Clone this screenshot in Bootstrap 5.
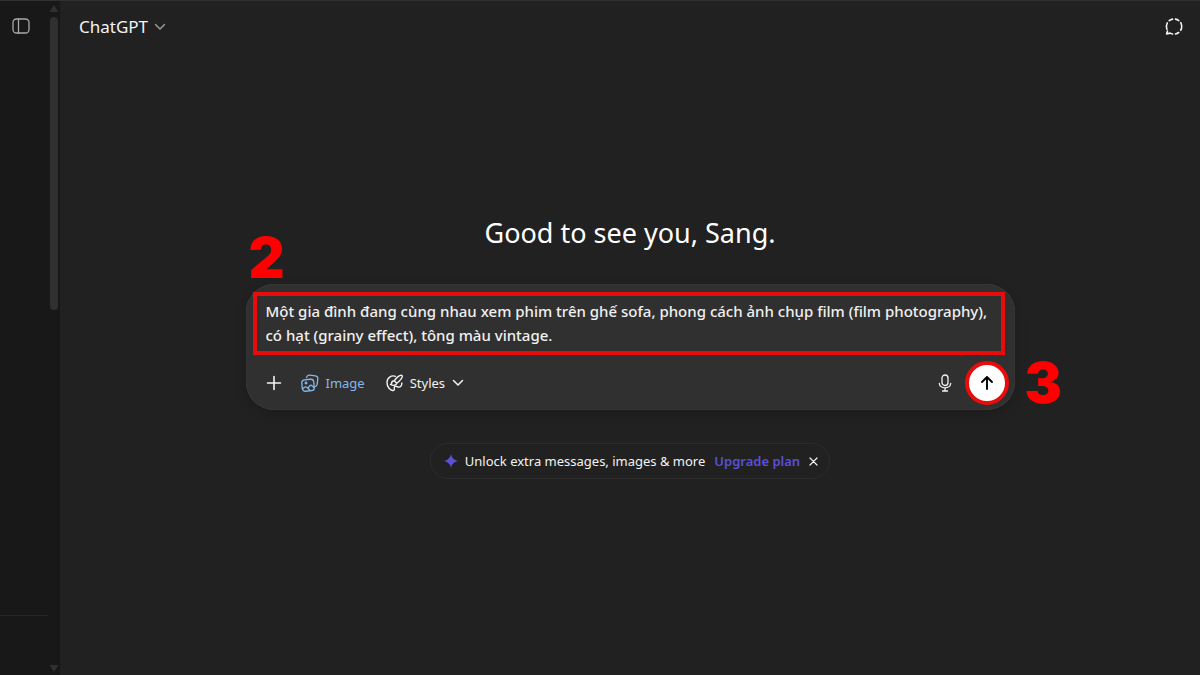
<!DOCTYPE html>
<html lang="vi">
<head>
<meta charset="utf-8">
<meta name="viewport" content="width=device-width, initial-scale=1">
<title>ChatGPT</title>
<link href="https://cdn.jsdelivr.net/npm/bootstrap@5.3.0/dist/css/bootstrap.min.css" rel="stylesheet">
<style>
body{background:#212121;color:#f3f3f3;font-family:"Noto Sans","Open Sans",sans-serif;font-size:13px;line-height:20px}
.shell{border-top:1px solid #303030}
button{background:none;border:0;padding:0;color:inherit;display:flex;align-items:center}
svg{display:block;fill:none;stroke:currentColor;stroke-linecap:round;stroke-linejoin:round;flex:none}
.side{width:60px;background:#181818}
.side-body{width:48px}
.toggle{color:#a8a8a8;margin:16px 0 0 12px}
.side-foot{height:60px;border-top:1px solid #262626}
.scrollbar-rail{width:12px;padding:4px 2px 3px 2px}
.scrollbar-rail svg{fill:#303030;stroke:none}
.thumb{width:8px;height:44%;margin:5px 0 auto;border-radius:4px;background:#303030}
.topbar{height:52px;padding:0 16px 0 19px}
.model{font-size:17px;line-height:24px;gap:6px}
.model svg{color:#a0a0a0}
.stage{padding:160px 16px 0}
h1{font-size:27px;line-height:40px;font-weight:400;margin:0 0 31px;color:#fff}
.composer{width:100%;max-width:769px;background:#303030;border-radius:28px;padding:8px 6px 5px 7px;box-shadow:0 4px 12px rgba(0,0,0,.16),inset 0 0 1px rgba(255,255,255,.25)}
.prompt-box{border:4px solid #e90c0c;margin-right:4px;padding:3px 9px 4px}
.prompt-box textarea{display:block;width:100%;height:48px;resize:none;border:0;padding:0;outline:0;overflow:hidden;background:none;color:#f0f0f0;font-size:15px;line-height:24px;font-weight:500}
.tools{height:44px;margin-top:6px;padding-left:13px}
.image-tool{color:#84b9ed;gap:7px;margin-left:19px}
.style-tool{gap:7px;margin-left:21px}
.send{width:44px;height:44px;border:4px solid #e90c0c;border-radius:50%;background:#fff;color:#000;justify-content:center;margin-left:13px}
.step{position:absolute;color:#f00;font:900 56px/56px Inter,sans-serif}
.step-two{left:3px;top:-54px}
.step-three{left:100%;margin-left:10px;bottom:-1px}
.upsell{margin-top:33px;height:36px;padding:0 11px 0 13px;border:1px solid #2c2c2c;border-radius:18px;font-size:13px}
.upsell a{color:#5b50d6;font-weight:600;text-decoration:none;margin:0 9px}
.upsell span{margin-left:7px}
.spark{fill:#5b50d6;stroke:none}
</style>
</head>
<body>
<div class="shell d-flex min-vh-100">
  <aside class="side d-flex flex-shrink-0">
    <div class="side-body d-flex flex-column justify-content-between">
      <button class="toggle" aria-label="Open sidebar"><svg width="18" height="18" viewBox="0 0 18 18" stroke-width="1.3"><rect x="1" y="2" width="16" height="14" rx="3.5"/><path d="M6.5 2v14"/></svg></button>
      <div class="side-foot"></div>
    </div>
    <div class="scrollbar-rail d-flex flex-column" aria-hidden="true">
      <svg width="8" height="7" viewBox="0 0 8 7"><path d="M4 0 8.500 7h-9z"/></svg>
      <div class="thumb"></div>
      <svg width="8" height="7" viewBox="0 0 8 7"><path d="M4 7 8.500 0h-9z"/></svg>
    </div>
  </aside>
  <main class="flex-grow-1">
    <header class="topbar d-flex align-items-center justify-content-between">
      <button class="model">ChatGPT <svg width="12" height="8" viewBox="0 0 12 8" stroke-width="1.4"><path d="m1.500 1.500 4.500 4.500 4.500-4.500"/></svg></button>
      <button aria-label="Temporary chat"><svg width="20" height="20" viewBox="0 0 20 20" stroke="#d0d0d0" stroke-width="1.600" stroke-linecap="butt"><path d="M11.500 2.100a7.800 7.800 0 0 1 3.300 1.500M16.700 5.700a7.800 7.800 0 0 1 0 7.600M14.700 15.500a7.800 7.800 0 0 1-3.200 1.500M8.500 17a7.800 7.800 0 0 1-2.300-.9l-3.600.8.900-2.800M2.900 12.300a7.800 7.800 0 0 1 .4-6.400M5.200 3.700a7.800 7.800 0 0 1 3.300-1.600"/></svg></button>
    </header>
    <section class="stage d-flex flex-column align-items-center">
      <h1>Good to see you, Sang.</h1>
      <form class="composer position-relative" onsubmit="return false">
        <div class="prompt-box"><textarea aria-label="Prompt" spellcheck="false">Một gia đình đang cùng nhau xem phim trên ghế sofa, phong cách ảnh chụp film (film photography), có hạt (grainy effect), tông màu vintage.</textarea></div>
        <div class="tools d-flex align-items-center">
          <button type="button" aria-label="Add"><svg width="16" height="16" viewBox="0 0 16 16" stroke-width="1.6"><path d="M8 1.500v13M1.500 8h13"/></svg></button>
          <button type="button" class="image-tool"><svg width="18" height="18" viewBox="0 0 18 18" stroke-width="1.300"><path d="M5.500 3.600 6 2.500Q6.600 1 8.700 1.200l5.700.7q2.700.4 2.400 3l-.7 5.500q-.3 1.900-2 2.200"/><rect x="1" y="5.500" width="12" height="11.500" rx="3" transform="rotate(-5 7 11)"/><circle cx="5" cy="9" r=".8"/><path d="m2 14.500 1.500-1.300q1.200-.8 2.500.2l3 2.800M7 14l1.700-2.200q1.200-1 2.300 0l2 1.700"/></svg>Image</button>
          <button type="button" class="style-tool"><svg width="17" height="18" viewBox="0 0 17 18" stroke-width="1.400"><path d="M9.500 2.300C5.300.8 1 3.800 1 8.500c0 4.500 3 7.500 5.500 8 1.700.3 2.200-1 1.800-2.300-.3-1.200.5-2 1.500-1.800l2.500.6c2.300.5 3.600-1.500 3.500-4"/><path d="M15.900 1.500c-1.600-1.400-6 2.600-7.700 5.300l2.600 2.400c2.700-2 6.700-6.300 5.100-7.700zM8.200 6.800c-1.900 0-2.500 1.200-2.600 2.500-.1.700-.6 1.100-1.200 1.200 2.900 1.500 6.100.9 6.400-1.300"/></svg>Styles<svg width="12" height="8" viewBox="0 0 12 8" stroke-width="1.500"><path d="m1.500 1.500 4.500 4.500 4.500-4.500"/></svg></button>
          <button type="button" class="ms-auto" aria-label="Dictate"><svg width="14" height="18" viewBox="0 0 14 18" stroke-width="1.300"><rect x="4" y="1" width="6" height="10.500" rx="3"/><path d="M1.300 9.500c.8 5.700 10.600 5.700 11.400 0M7 14v3M4.500 17h5"/></svg></button>
          <button class="send" aria-label="Send"><svg width="16" height="16" viewBox="0 0 16 16" stroke-width="1.900"><path d="M8 14v-12M3 7 8 2l5 5"/></svg></button>
        </div>
        <span class="step step-two">2</span>
        <span class="step step-three">3</span>
      </form>
      <div class="upsell d-flex align-items-center">
        <svg class="spark" width="14" height="14" viewBox="0 0 14 14"><path d="M7 0c.7 3.500 2.500 5.800 7 7-4.500 1.200-6.300 3.500-7 7-.7-3.500-2.500-5.800-7-7 4.500-1.200 6.300-3.500 7-7z"/></svg>
        <span>Unlock extra messages, images &amp; more</span><a href="#">Upgrade plan</a>
        <button aria-label="Dismiss"><svg width="9" height="9" viewBox="0 0 9 9" stroke-width="1.200"><path d="m1 1 7 7M8 1 1 8"/></svg></button>
      </div>
    </section>
  </main>
</div>
</body>
</html>
